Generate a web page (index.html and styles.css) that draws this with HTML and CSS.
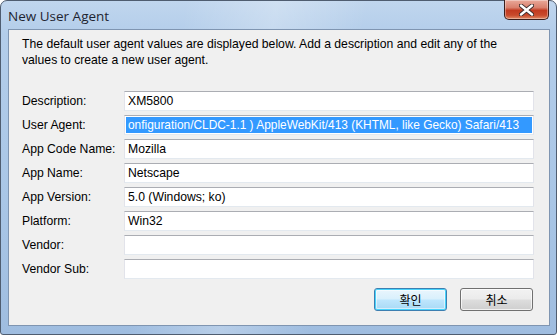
FILE: index.html
```html
<!DOCTYPE html>
<html lang="en">
<head>
    <meta charset="UTF-8">
    <title>New User Agent</title>
    <link rel="stylesheet" href="styles.css">
</head>
<body>
    <div class="window">
        <div class="titlebar">
            <span class="title">New User Agent</span>
            <button class="close-btn" aria-label="Close">
                <svg width="15" height="12" viewBox="0 0 15 12">
                    <path d="M2 1.5 L13 10.5 M13 1.5 L2 10.5" stroke="#3b2a2a" stroke-width="4.2" stroke-linecap="round"/>
                    <path d="M2 1.5 L13 10.5 M13 1.5 L2 10.5" stroke="#ffffff" stroke-width="2.4" stroke-linecap="round"/>
                </svg>
            </button>
        </div>
        <div class="client">
            <p class="intro">The default user agent values are displayed below. Add a description and edit any of the values to create a new user agent.</p>
            <div class="form">
                <label for="description">Description:</label>
                <div class="field" id="description">XM5800</div>

                <label for="user_agent">User Agent:</label>
                <div class="field field-selected" id="user_agent"><span class="selected">onfiguration/CLDC-1.1 ) AppleWebKit/413 (KHTML, like Gecko) Safari/413</span></div>

                <label for="app_code_name">App Code Name:</label>
                <div class="field" id="app_code_name">Mozilla</div>

                <label for="app_name">App Name:</label>
                <div class="field" id="app_name">Netscape</div>

                <label for="app_version">App Version:</label>
                <div class="field" id="app_version">5.0 (Windows; ko)</div>

                <label for="platform">Platform:</label>
                <div class="field" id="platform">Win32</div>

                <label for="vendor">Vendor:</label>
                <div class="field" id="vendor"></div>

                <label for="vendor_sub">Vendor Sub:</label>
                <div class="field" id="vendor_sub"></div>
            </div>
            <div class="buttons">
                <button class="btn btn-default">확인</button>
                <button class="btn">취소</button>
            </div>
        </div>
    </div>
</body>
</html>
```

FILE: styles.css
```css
html, body {
    margin: 0;
    padding: 0;
    background: #ffffff;
}
body {
    width: 557px;
    height: 335px;
    overflow: hidden;
    font-family: 'Liberation Sans', 'Noto Sans CJK KR', sans-serif;
    font-size: 12.2px;
    color: #000;
}
.window {
    height: 335px;
    box-sizing: border-box;
    border: 1px solid #4f5d70;
    border-radius: 7px 7px 3px 3px;
    padding: 0 6px 8px 7px;
    display: flex;
    flex-direction: column;
    background:
        linear-gradient(100deg, rgba(255, 255, 255, 0) 30%, rgba(255, 255, 255, 0.25) 45%, rgba(255, 255, 255, 0) 60%),
        linear-gradient(180deg, #c0d6ee 0%, #b3cdea 10%, #a9c6e6 60%, #9fbde0 100%);
}
.titlebar {
    height: 28px;
    display: flex;
    align-items: flex-start;
    justify-content: space-between;
    flex-shrink: 0;
}
.title {
    font-family: 'Open Sans', 'Liberation Sans', sans-serif;
    font-size: 13.5px;
    color: #1e2430;
    margin-top: 6px;
}
.close-btn {
    width: 45px;
    height: 20px;
    margin-top: -1px;
    margin-right: 1px;
    padding: 0;
    border: 1px solid #3a1e1c;
    border-top: none;
    border-radius: 0 0 5px 5px;
    background: linear-gradient(180deg, #e9a99a 0%, #d9806d 40%, #c23a20 55%, #c84a2c 80%, #e08a66 100%);
    display: flex;
    align-items: center;
    justify-content: center;
    box-shadow: inset 0 0 0 1px rgba(255, 255, 255, 0.35);
}
.client {
    flex: 1;
    background: #f0f0f0;
    border: 1px solid #7f95b1;
    padding: 6px 15px 0 13px;
}
.intro {
    margin: 0;
    line-height: 16px;
    width: 500px;
}
.form {
    display: grid;
    grid-template-columns: 102px 1fr;
    row-gap: 4px;
    margin-top: 23px;
}
.form label {
    line-height: 20px;
}
.field {
    height: 20px;
    box-sizing: border-box;
    background: #fff;
    border: 1px solid #e2e3ea;
    border-top-color: #abadb3;
    border-bottom-color: #e3e9ef;
    padding: 1px 3px 0 3px;
    line-height: 16px;
    white-space: nowrap;
    overflow: hidden;
}
.field-selected {
    font-size: 11.9px;
    padding-right: 1px;
}
.selected {
    background: #3399ff;
    color: #fff;
    display: block;
    margin-left: -2px;
    padding-left: 2px;
}
.buttons {
    display: flex;
    justify-content: flex-end;
    gap: 13px;
    margin-top: 9px;
    padding-right: 1px;
}
.btn {
    width: 73px;
    height: 23px;
    padding: 0;
    font-family: 'Noto Sans CJK KR', sans-serif;
    font-size: 12px;
    color: #000;
    border: 1px solid #707070;
    border-radius: 3px;
    background: linear-gradient(180deg, #f2f2f2 0%, #ebebeb 48%, #dddddd 52%, #cfcfcf 100%);
    box-shadow: inset 0 0 0 1px rgba(255, 255, 255, 0.7);
}
.btn-default {
    border-color: #3c7fb1;
    box-shadow: inset 0 0 0 1px #48d3fb, inset 0 0 0 2px rgba(255, 255, 255, 0.5);
    background: linear-gradient(180deg, #eaf6fd 0%, #d9f0fc 48%, #bee6fd 52%, #a7d9f5 100%);
}
```
